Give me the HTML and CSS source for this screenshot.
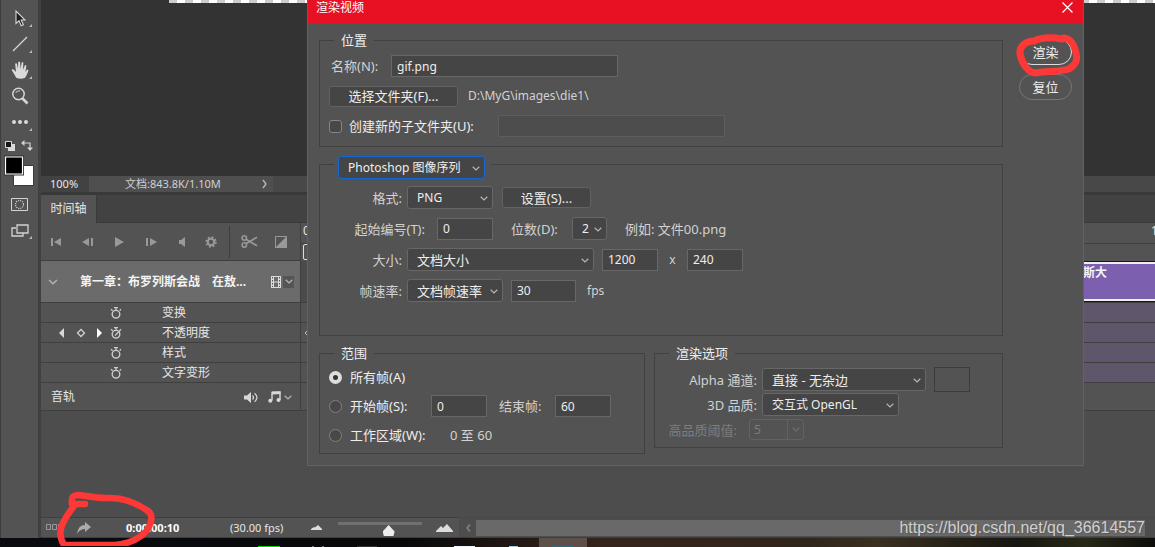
FILE: index.html
```html
<!DOCTYPE html>
<html lang="zh-CN">
<head>
<meta charset="utf-8">
<meta name="viewport" content="width=device-width, initial-scale=1">
<title>渲染视频</title>
<link rel="stylesheet" href="styles.css">
</head>
<body>
<svg class="defs" aria-hidden="true">
  <symbol id="chevron" viewBox="0 0 8 5"><path d="M.7.8 4 4 7.300.8" fill="none" stroke="currentColor" stroke-width="1.200"/></symbol>
  <symbol id="watch" viewBox="0 0 12 12"><path d="M4 .6h4M6 1v2M1 2.200l1.700 1.500M11 2.200 9.700 3.500" fill="none" stroke="currentColor" stroke-width="1.300"/><circle cx="6" cy="7.200" r="3.800" fill="none" stroke="currentColor" stroke-width="1.400"/></symbol>
  <symbol id="corner" viewBox="0 0 4 4"><path d="M4 0v4H0z" fill="#b9b9b9"/></symbol>
</svg>
<div class="app">
  <div class="workspace">
    <nav class="tools" aria-label="工具">
      <button class="tool" aria-label="路径选择"><svg width="12" height="17" viewBox="0 0 12 17"><path d="M2 1v12.500l3-2.800 2.200 5 2.200-1-2.200-4.700H11z" fill="#1c1c1c" stroke="#d8d8d8" stroke-width="1.100"/></svg><svg class="corner"><use href="#corner"/></svg></button>
      <button class="tool" aria-label="直线"><svg width="16" height="16" viewBox="0 0 16 16"><path d="M1 15 15 1" stroke="#d8d8d8" stroke-width="1.300"/></svg><svg class="corner"><use href="#corner"/></svg></button>
      <button class="tool" aria-label="抓手"><svg width="18" height="18" viewBox="0 0 18 18"><path d="M5.500 17C4 15 2.500 11.500.900 9.500.300 8.300 1.800 7.600 2.900 8.700L5 11 4.200 3.400C4.200 2 5.900 2 6.100 3.300L7 8l.200-6.500c.1-1.400 1.800-1.400 1.900 0L9.600 8l1-6.100c.2-1.200 1.800-1 1.700.3L12 8.700l1.700-4c.5-1.100 1.900-.6 1.600.6L14.400 11l1.400-2c.7-.9 1.900-.2 1.500.8-1 3-2 5.500-3.500 7.200q-4 1.500-8.300 0z" fill="#dadada"/></svg><svg class="corner"><use href="#corner"/></svg></button>
      <button class="tool" aria-label="缩放"><svg width="18" height="18" viewBox="0 0 18 18" fill="none" stroke="#d6d6d6"><circle cx="7.500" cy="7" r="5.700" stroke-width="1.500"/><path d="M4.700 6A3.500 3.500 0 0 1 9 4"/><path d="m11.500 11.500 5 5" stroke-width="2.600"/></svg></button>
      <button class="tool" aria-label="更多工具"><svg width="16" height="4" viewBox="0 0 16 4" fill="#dadada"><circle cx="2" cy="2" r="2"/><circle cx="8" cy="2" r="2"/><circle cx="14" cy="2" r="2"/></svg><svg class="corner"><use href="#corner"/></svg></button>
      <button class="swatches" aria-label="前景色和背景色"><svg width="32" height="50" viewBox="0 0 32 50"><path d="M4 4h7v7H4z" fill="#dadada"/><path d="M1.500 1.500h6v6h-6z" fill="#161616" stroke="#dadada"/><path d="M20 3h6v6" fill="none" stroke="#d4d4d4" stroke-width="1.200"/><path d="m17 3 3.500-3v6zM26 11l-3-3.500h6z" fill="#d4d4d4"/><path d="M9.500 25.500h20v20h-20z" fill="#fff" stroke="#3b3b3b"/><path d="M0 15.500h20v20H0z" fill="#333"/><path d="M1.500 17h17v17h-17z" fill="#000" stroke="#fff" stroke-width="1.200"/></svg></button>
      <button class="tool" aria-label="快速蒙版"><svg width="17" height="13" viewBox="0 0 17 13" fill="none" stroke="#d4d4d4"><path d="M.5.5h16v12H.5z"/><circle cx="8.500" cy="6.500" r="4" stroke-width="1.200" stroke-dasharray="1.100 1"/></svg></button>
      <button class="tool" aria-label="屏幕模式"><svg width="18" height="13" viewBox="0 0 18 13" fill="none" stroke="#d4d4d4" stroke-width="1.300"><path d="M5 4H1v8h11V9"/><path d="M6 1h11v8H6z"/></svg><svg class="corner"><use href="#corner"/></svg></button>
    </nav>

    <main class="main">
      <div class="canvas"><div class="checker"></div></div>
      <div class="status"><span class="zoom">100%</span><button class="docinfo"><span>文档:843.8K/1.10M</span><svg width="6" height="10" viewBox="0 0 6 10"><path d="M1 1q3 4 3 4L1 9" fill="none" stroke="#bbb" stroke-width="1.300"/></svg></button></div>
      <div class="tabs"><button class="tab">时间轴</button></div>
      <div class="timeline">
        <section class="layers">
          <div class="transport">
            <button aria-label="第一帧"><svg width="11" height="8" viewBox="0 0 11 8"><path d="M0 0h2v8H0zM10 0v8L3 4z"/></svg></button>
            <button aria-label="上一帧"><svg width="12" height="8" viewBox="0 0 12 8"><path d="M7 0v8L0 4zM9 0h2v8H9z"/></svg></button>
            <button aria-label="播放"><svg width="9" height="10" viewBox="0 0 9 10"><path d="m0 0 9 5-9 5z"/></svg></button>
            <button aria-label="下一帧"><svg width="12" height="8" viewBox="0 0 12 8"><path d="M1 0h2v8H1zM5 0v8l7-4z"/></svg></button>
            <button aria-label="音频"><svg width="7" height="10" viewBox="0 0 7 10"><path d="M0 3h2l4-3v10L2 7H0z"/></svg></button>
            <button class="gear" aria-label="设置"><svg width="12" height="12" viewBox="0 0 12 12"><circle cx="6" cy="6" r="3.200" fill="none" stroke="#999" stroke-width="2"/><circle cx="6" cy="6" r="4.800" fill="none" stroke="#999" stroke-width="1.800" stroke-dasharray="1.900 1.870"/></svg></button>
            <button class="split" aria-label="拆分"><svg width="17" height="13" viewBox="0 0 17 13" fill="none" stroke="#999" stroke-width="1.600"><circle cx="3.300" cy="3" r="2.200"/><circle cx="3.300" cy="10" r="2.200"/><path d="M5 4.300 16 10.800M5 8.700 16 2.200"/></svg></button>
            <button class="fade" aria-label="过渡"><svg width="12" height="12" viewBox="0 0 12 12"><path d="M.5.5h11v11H.5z" fill="none" stroke="#999"/><path d="M12 0v12H0z"/></svg></button>
          </div>
          <div class="cliprow">
            <svg class="chev wide"><use href="#chevron"/></svg>
            <strong>第一章：布罗列斯会战　在敖...</strong>
            <svg width="10" height="12" viewBox="0 0 10 12"><path d="M0 0h3v12H0zM7 0h3v12H7z" fill="#ddd"/><path d="M3 .5h4M3 6h4M3 11.500h4" stroke="#ddd"/><path d="M1.500 1v10M8.500 1v10" stroke="#555" stroke-dasharray="1.500 1.500"/></svg>
            <button class="drop" aria-label="视频选项"><svg class="chev"><use href="#chevron"/></svg></button>
          </div>
          <div class="prop"><span class="keys"></span><svg class="watch"><use href="#watch"/></svg><span>变换</span></div>
          <div class="prop"><span class="keys"><svg width="44" height="10" viewBox="0 0 44 10"><path d="M5 0v10L0 5z" fill="#d8d8d8"/><path d="m22 1.500 3.500 3.500-3.500 3.500L18.500 5z" fill="none" stroke="#d0d0d0" stroke-width="1.300"/><path d="M38 0v10l5-5z" fill="#fff"/></svg></span><svg class="watch"><use href="#watch"/><path d="m5 8.500 5-5" stroke="currentColor" stroke-width="1.300"/></svg><span>不透明度</span></div>
          <div class="prop"><span class="keys"></span><svg class="watch"><use href="#watch"/></svg><span>样式</span></div>
          <div class="prop"><span class="keys"></span><svg class="watch"><use href="#watch"/></svg><span>文字变形</span></div>
          <div class="audio"><span>音轨</span>
            <svg width="14" height="11" viewBox="0 0 14 11"><path d="M0 3.500h3L7 0v11L3 7.500H0z" fill="#d8d8d8"/><path d="M8.500 3.500q2 2 0 4M10.500 1.300q5 4.200 0 8.400" fill="none" stroke="#d0d0d0" stroke-width="1.300"/></svg>
            <svg width="13" height="12" viewBox="0 0 13 12"><path d="M4 9.500v-8L12 1v8" fill="none" stroke="#d8d8d8" stroke-width="1.400"/><path d="M4 .5h8.500V3L4 3.500z" fill="#d8d8d8"/><circle cx="2.300" cy="9.700" r="2" fill="#d8d8d8"/><circle cx="10.500" cy="9" r="2" fill="#d8d8d8"/></svg>
            <svg class="chev"><use href="#chevron"/></svg>
          </div>
        </section>
        <section class="tracks">
          <div class="ruler"><span>0</span><span>1</span></div>
          <div class="scrub"><i></i></div>
          <div class="cliptrack"><div class="clip">斯大</div></div>
          <div class="lane"><div></div></div>
          <div class="lane keyed"><svg width="6" height="8" viewBox="0 0 6 8"><path d="M5 1 2 4l3 3" fill="none" stroke="#bbb"/></svg><div></div></div>
          <div class="lane"><div></div></div>
          <div class="lane"><div></div></div>
          <div class="audiolane"></div>
        </section>
      </div>
      <footer class="bottom">
        <div class="controls">
          <button aria-label="转换为帧动画"><svg width="18" height="7" viewBox="0 0 18 7" fill="none" stroke="#999"><path d="M.5.5h4v5h-4zM6.500.5h4v5h-4zM12.500.5h4v5h-4z"/></svg></button>
          <button aria-label="渲染视频"><svg width="14" height="12" viewBox="0 0 14 12"><path d="M8 0l6 5-6 5V7Q3 7 0 12 1 3 8 3z" fill="#aaa"/></svg></button>
          <b class="time">0:00:00:10</b><span class="fps">(30.00 fps)</span>
          <svg width="11" height="5" viewBox="0 0 11 5"><path d="M0 5V4l3-2 1 .5L7 0l4 4v1z" fill="#ddd"/></svg>
          <input class="range" type="range" min="0" max="100" value="62" aria-label="时间轴缩放">
          <svg width="17" height="8" viewBox="0 0 17 8"><path d="M0 8V7l5-5 2 2 4-4 6 7v1z" fill="#ddd"/></svg>
        </div>
        <div class="scroll"><svg width="5" height="8" viewBox="0 0 5 8"><path d="M4 .5 1 4l3 3.500" fill="none" stroke="#888" stroke-width="1.300"/></svg><div class="thumb"></div></div>
      </footer>
    </main>
  </div>
  <div class="taskbar">
    <svg width="600" height="9" viewBox="0 0 600 9"><path d="M539 0h48v9h-48z" fill="#5d4f4a"/><path d="M258 8h22v1h-22z" fill="#00d800"/><path d="M454 8h21v1h-21z" fill="#f4f4ff"/><path d="M357 8h20v1h-20z" fill="#303030"/><path d="M509 8h9v1h-9z" fill="#a9cbe0"/><path d="M552 8h21v1h-21z" fill="#2f6a7c"/><path d="M312 8h2v1h-2zM322 8h2v1h-2z" fill="#777"/></svg>
  </div>

  <form class="dialog" role="dialog" aria-labelledby="dlg-title" onsubmit="return false">
    <header class="titlebar"><span id="dlg-title">渲染视频</span><button type="button" aria-label="关闭"><svg width="11" height="11" viewBox="0 0 11 11"><path d="m.5.5 10 10M10.500.5l-10 10" stroke="#fff" stroke-width="1.200"/></svg></button></header>
    <div class="body">
      <div class="panels">
        <fieldset class="location">
          <legend>位置</legend>
          <div class="row"><label class="name" for="name">名称(N):</label><input class="wide-in" id="name" type="text" value="gif.png"></div>
          <div class="row"><button type="button" class="btn folder">选择文件夹(F)...</button><span class="path dim">D:\MyG\images\die1\</span></div>
          <div class="row"><label class="check"><input type="checkbox"><span>创建新的子文件夹(U):</span></label><input class="wide-in off" type="text" aria-label="子文件夹名称" disabled></div>
        </fieldset>

        <fieldset class="sequence">
          <legend><span class="select focus latin"><select aria-label="编码器"><option>Photoshop 图像序列</option></select><svg class="chev"><use href="#chevron"/></svg></span></legend>
          <div class="row"><label class="lab" for="fmt">格式:</label><span class="select s-86 latin"><select id="fmt"><option>PNG</option></select><svg class="chev"><use href="#chevron"/></svg></span><button type="button" class="btn setup">设置(S)...</button></div>
          <div class="row"><label class="lab long" for="start">起始编号(T):</label><input class="num" id="start" type="text" value="0"><label class="digits" for="digits">位数(D):</label><span class="select s-36 latin"><select id="digits"><option>2</option></select><svg class="chev"><use href="#chevron"/></svg></span><span class="example dim">例如: 文件00.png</span></div>
          <div class="row"><label class="lab" for="size">大小:</label><span class="select s-187"><select id="size"><option>文档大小</option></select><svg class="chev"><use href="#chevron"/></svg></span><input class="num after" type="text" value="1200" aria-label="宽度"><span class="times latin">x</span><input class="num" type="text" value="240" aria-label="高度"></div>
          <div class="row"><label class="lab" for="rate">帧速率:</label><span class="select s-96"><select id="rate"><option>文档帧速率</option></select><svg class="chev"><use href="#chevron"/></svg></span><input class="num after fpsin" type="text" value="30" aria-label="帧速率数值"><span class="unit dim latin">fps</span></div>
        </fieldset>

        <div class="pair">
          <fieldset class="scope">
            <legend>范围</legend>
            <div class="row"><label class="radio"><input type="radio" name="r" checked><span>所有帧(A)</span></label></div>
            <div class="row"><label class="radio"><input type="radio" name="r"><span>开始帧(S):</span></label><input class="num" type="text" value="0" aria-label="开始帧"><label class="end" for="end">结束帧:</label><input class="num" id="end" type="text" value="60"></div>
            <div class="row"><label class="radio area"><input type="radio" name="r"><span>工作区域(W):</span></label><span class="dim">0 至 60</span></div>
          </fieldset>
          <fieldset class="options">
            <legend>渲染选项</legend>
            <div class="row"><label class="lab" for="alpha">Alpha 通道:</label><span class="select s-164"><select id="alpha"><option>直接 - 无杂边</option></select><svg class="chev"><use href="#chevron"/></svg></span><button type="button" class="matte" aria-label="杂边颜色"></button></div>
            <div class="row"><label class="lab" for="q3d">3D 品质:</label><span class="select s-137 latin"><select id="q3d"><option>交互式 OpenGL</option></select><svg class="chev"><use href="#chevron"/></svg></span></div>
            <div class="row disabled"><label class="lab short" for="thr">高品质阈值:</label><span class="combo"><input id="thr" type="text" value="5" disabled><svg class="chev"><use href="#chevron"/></svg></span></div>
          </fieldset>
        </div>
      </div>
      <div class="actions"><button type="submit" class="pill primary">渲染</button><button type="button" class="pill">复位</button></div>
    </div>
  </form>

  <svg class="mark mark-top" width="70" height="50" viewBox="0 0 70 50"><path d="M49 9C38 7 27 8 21 11 12 11 6 17 7 24c2 10 8 18 15 19 10-2 25-1 34-4 6-4 9-8 7-16C62 16 58 9 51 8" fill="none" stroke="#fe3737" stroke-width="7" stroke-linecap="round" stroke-linejoin="round"/></svg>
  <svg class="mark mark-low" width="110" height="60" viewBox="0 0 110 60"><path d="M30 18H17c-1-7 1-9 7-9 8 1 17 3 27 3 18-1 31 5 42 13 7 5 2 19-7 25-9 7-19 8-27 9H9C2 48 5 38 19 20" fill="none" stroke="#fe3737" stroke-width="6.500" stroke-linecap="round" stroke-linejoin="round"/></svg>
  <span class="watermark">https://blog.csdn.net/qq_36614557</span>
</div>
</body>
</html>
```
FILE: styles.css
```css
* { box-sizing: border-box; }
body { margin: 0; background: #333; color: #e6e6e6; font: 12px/16px "Noto Sans", "Noto Sans CJK SC", sans-serif; }
button, input, select { font: inherit; color: inherit; margin: 0; padding: 0; border: 0; background: none; }
button { display: inline-flex; align-items: center; justify-content: center; white-space: nowrap; }
svg { display: block; flex: none; }
.defs { position: absolute; width: 0; height: 0; }
.chev { width: 8px; height: 5px; color: #b5b5b5; }
.app { position: relative; height: 100vh; overflow: hidden; display: flex; flex-direction: column; }
.workspace { flex: 1; min-height: 0; display: flex; }

.tools { flex: none; width: 41px; padding-top: 5px; display: flex; flex-direction: column; background: #535353; border-left: 1px solid #3c3c3c; border-right: 3px solid #414141; }
.tool { position: relative; height: 26px; flex: none; }
.tool .corner { position: absolute; right: 6px; bottom: 4px; width: 3px; height: 3px; }
.swatches { height: 56px; flex: none; justify-content: flex-start; align-items: flex-end; padding: 0 0 1px 3px; }
.swatches svg { overflow: visible; }

.main { flex: 1; min-width: 0; display: flex; flex-direction: column; background: #4d4d4d; }
.canvas { flex: none; height: 176px; background: #333; }
.checker { height: 3px; margin-left: 128px; background: repeating-linear-gradient(90deg, #ccc 0 8px, #fff 8px 16px); }
.status { flex: none; height: 19px; display: flex; align-items: stretch; background: #484848; border-bottom: 3px solid #393939; font-size: 11px; }
.zoom { width: 48px; padding-left: 9px; background: #424242; }
.docinfo { width: 184px; background: #4f4f4f; justify-content: space-between; padding: 0 5px 0 36px; color: #d0d0d0; }
.tabs { flex: none; height: 28px; display: flex; background: #424242; border-bottom: 1px solid #3a3a3a; }
.tab { width: 56px; height: 28px; background: #535353; border-right: 1px solid #3a3a3a; }

.timeline { flex: 1; min-height: 0; display: flex; }
.layers { flex: none; width: 260px; }
.transport { height: 38px; display: flex; align-items: center; background: #535353; border-bottom: 1px solid #3f3f3f; border-right: 1px solid #3f3f3f; }
.transport button { flex: 1 1 30px; fill: #999; }
.transport .gear { padding-right: 6px; }
.transport .split { border-left: 1px solid #3f3f3f; height: 32px; flex-basis: 38px; }
.transport .fade { padding-right: 6px; }
.cliprow { height: 42px; display: flex; align-items: center; gap: 2px; padding: 0 6px 0 7px; background: #6b6b6b; border-bottom: 1px solid #3f3f3f; border-right: 1px solid #3f3f3f; }
.cliprow .wide { width: 10px; height: 6px; }
.cliprow strong { flex: 1; padding-left: 20px; color: #f4f4f4; white-space: nowrap; }
.drop { width: 11px; height: 12px; background: #555; }
.prop { height: 20px; padding-top: 1px; display: flex; align-items: center; background: #535353; border-bottom: 1px solid #3f3f3f; border-right: 1px solid #3f3f3f; }
.keys { width: 69px; padding-left: 18px; }
.watch { width: 12px; height: 12px; margin-right: 40px; color: #ccc; }
.audio { height: 28px; display: flex; align-items: center; padding: 1px 8px 0 10px; background: #535353; border-bottom: 1px solid #3f3f3f; border-right: 1px solid #3f3f3f; }
.audio span { flex: 1; }
.audio svg + svg { margin-left: 10px; }
.audio .chev.chev { margin-left: 3px; }
.tracks { flex: 1; min-width: 0; }
.ruler { height: 21px; display: flex; justify-content: space-between; padding-left: 2px; background: #535353; border-bottom: 1px solid #3f3f3f; overflow: hidden; }
.ruler span:last-child { width: 4px; }
.scrub { height: 17px; padding-left: 2px; background: #535353; }
.scrub i { display: block; width: 12px; height: 16px; border: 1px solid #ddd; border-radius: 2px; }
.cliptrack { height: 42px; padding: 1px 0 0 60px; background: #4b4b4b; border-bottom: 1px solid #3f3f3f; }
.clip { height: 39px; padding: 1px 48px 0 0; text-align: right; line-height: 15px; font-weight: bold; color: #f4f4f4; background: #7c5fae; border: solid #eee; border-width: 2px 0; outline: 1px solid #181818; }
.lane { height: 20px; padding-left: 60px; display: flex; background: #535353; border-bottom: 1px solid #3f3f3f; }
.lane div { flex: 1; background: #5f566c; }
.keyed { padding-left: 2px; align-items: center; }
.keyed div { margin-left: 52px; align-self: stretch; }
.audiolane { height: 28px; background: #535353; border-bottom: 1px solid #3f3f3f; }

.bottom { flex: none; height: 21px; display: flex; border-bottom: 1px solid #3f3f3f; }
.controls { flex: none; width: 418px; display: flex; align-items: center; background: #535353; border-top: 1px solid #3f3f3f; padding-left: 5px; font-size: 11px; }
.controls button + button { margin-left: 13px; }
.time { box-sizing: content-box; width: 69px; padding-left: 35px; margin-right: 35px; color: #fff; }
.fps { width: 81px; }
.range { appearance: none; width: 84px; height: 15px; margin: 0 14px 0 16px; background: linear-gradient(#707070, #707070) 0 2px / 100% 3px no-repeat; }
.range::-webkit-slider-thumb { appearance: none; width: 12px; height: 11px; margin-top: 6px; background: #eee; clip-path: polygon(50% 0, 100% 60%, 90% 100%, 10% 100%, 0 60%); }
.scroll { flex: 1; display: flex; align-items: center; gap: 5px; padding: 2px 10px 2px 7px; border-top: 1px solid #494949; }
.thumb { flex: 1; height: 16px; background: #696969; }
.taskbar { flex: none; height: 9px; background: linear-gradient(90deg, #090b0e 0, #08080a 35%, #35241b 52%, #30251b 70%, #3a3020 76%, #171610 88%, #292918 94%, #0c0c0a); }

.dialog { position: absolute; top: 0; left: 307px; right: 71px; background: #535353; border: 1px solid #dc2b3c; border-top: 0; font-size: 13px; }
.titlebar { height: 23px; display: flex; align-items: flex-start; justify-content: space-between; padding: 0 10px 0 8px; background: #e81123; color: #fff; font-size: 12px; line-height: 15px; }
.titlebar button { height: 14px; }
.body { display: flex; gap: 16px; padding: 9px 11px 11px; }
.panels { flex: 1; min-width: 0; display: flex; flex-direction: column; gap: 9px; }
fieldset { min-width: 0; margin: 0; padding: 0; border: 1px solid #414141; }
legend { height: 16px; margin-left: 14px; padding: 0 7px; color: #eee; }
.row { display: flex; align-items: center; height: 22px; white-space: nowrap; }
.dim, label, .times { color: #d2d2d2; }
.dialog .latin, .dialog .path { font-size: 12px; }
input[type="text"] { height: 22px; padding-left: 5px; border: 1px solid #676767; background: #454545; color: #eee; min-width: 0; font-size: 12px; }
.num { width: 56px; }
.btn { height: 21px; border: 1px solid #626262; border-radius: 3px; background: #454545; color: #eee; }

.location { padding: 7px 9px 9px; }
.location legend, .scope legend { margin-left: 5px; }
.location .row + .row { margin-top: 8px; }
.name { width: 62px; padding-left: 2px; }
.wide-in { width: 227px; }
.folder { width: 129px; }
.path { margin-left: 10px; }
.check { display: flex; align-items: center; gap: 7px; width: 169px; color: #eee; }
.check input { appearance: none; width: 13px; height: 13px; border: 1px solid #858585; border-radius: 3px; background: #484848; }
.wide-in.off { background: #4d4d4d; border-color: #5d5d5d; }

.select { display: inline-grid; grid-template-columns: 1fr 16px; align-items: center; height: 23px; border: 1px solid #676767; border-radius: 3px; background: #454545; color: #eee; }
.select select { grid-area: 1 / 1 / 2 / 3; width: 100%; height: 21px; padding-left: 9px; appearance: none; }
.select option { background: #454545; }
.select .chev { grid-area: 1 / 2; pointer-events: none; margin-top: 2px; margin-left: 4px; }
.focus { width: 147px; border-color: #1566d6; }
.s-36 { width: 35px; }
.s-86 { width: 86px; }
.s-96 { width: 96px; }
.s-187 { width: 187px; }
.s-164 { width: 164px; }
.s-137 { width: 137px; }
.sequence { padding: 13px 0 33px; }
.sequence legend { height: 17px; padding: 0 6px 0 4px; }
.sequence .row { height: 23px; }
.sequence .row + .row { margin-top: 8px; }
.lab { width: 82px; margin-right: 5px; text-align: right; }
.long { width: 105px; margin-right: 12px; }
.setup { width: 89px; margin-left: 9px; }
.digits { width: 79px; padding-left: 18px; }
.example { margin-left: 18px; }
.after { margin-left: 8px; }
.times { width: 29px; text-align: center; }
.fpsin { width: 65px; }
.unit { margin-left: 11px; }

.pair { display: grid; grid-template-columns: 326fr 349fr; gap: 9px; align-items: start; }
.scope { padding: 5px 9px 7px; }
.scope .row + .row { margin-top: 7px; }
.radio { display: flex; align-items: center; gap: 8px; width: 102px; color: #eee; }
.radio.area { width: 121px; }
.radio input { appearance: none; width: 13px; height: 13px; border: 1px solid #808080; border-radius: 50%; background: #484848; }
.radio input:checked { border: 4px solid #dedede; background: #333; }
.end { width: 68px; padding-left: 12px; }
.options { padding: 6px 0 5px; }
.options .row { height: 25px; }
.options .lab { width: 102px; }
.options .short { width: 82px; margin-right: 12px; }
.matte { width: 36px; height: 25px; margin-left: 8px; border: 1px solid #3c3c3c; }
.disabled label { color: #7d7d7d; }
.combo { display: flex; align-items: center; width: 55px; height: 21px; border: 1px solid #626262; border-radius: 3px; }
.combo input[type="text"] { width: 38px; height: 19px; padding-left: 4px; border: 0; border-right: 1px solid #626262; background: none; color: #7d7d7d; }
.combo .chev { margin-left: 4px; color: #6e6e6e; }
.actions { flex: none; width: 53px; padding-top: 7px; display: flex; flex-direction: column; gap: 9px; }
.pill { height: 26px; border: 1px solid #767676; border-radius: 13px; color: #eee; }
.primary { border-color: #ddd; }

.mark { position: absolute; pointer-events: none; }
.mark-top { left: 1013px; top: 30px; }
.mark-low { left: 55px; top: 486px; }
.watermark { position: absolute; right: 10px; bottom: 9px; font: 16px/20px "Liberation Sans", Arial, sans-serif; color: #cfcfcf; text-shadow: 1px 1px 1px #555; }
```
